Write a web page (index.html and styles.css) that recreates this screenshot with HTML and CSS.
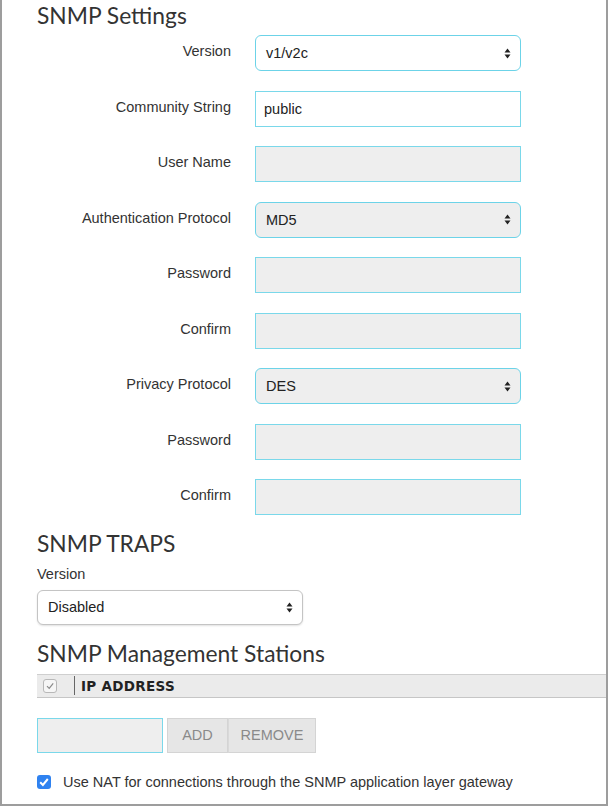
FILE: index.html
```html
<!DOCTYPE html>
<html>
<head>
<meta charset="utf-8">
<link rel="stylesheet" href="styles.css">
</head>
<body>
<div class="page">
  <h2 class="heading first">SNMP Settings</h2>
  <div class="form">
    <label class="lbl">Version</label>
    <div class="field select white"><span>v1/v2c</span><svg class="arrows" width="7" height="11" viewBox="0 0 7 11"><path d="M3.5 0.5L6.5 4.5H0.5Z M3.5 10.5L6.5 6.5H0.5Z" fill="#222"/></svg></div>

    <label class="lbl">Community String</label>
    <div class="field text white"><span>public</span></div>

    <label class="lbl">User Name</label>
    <div class="field text disabled"></div>

    <label class="lbl">Authentication Protocol</label>
    <div class="field select disabled"><span>MD5</span><svg class="arrows" width="7" height="11" viewBox="0 0 7 11"><path d="M3.5 0.5L6.5 4.5H0.5Z M3.5 10.5L6.5 6.5H0.5Z" fill="#222"/></svg></div>

    <label class="lbl">Password</label>
    <div class="field text disabled"></div>

    <label class="lbl">Confirm</label>
    <div class="field text disabled"></div>

    <label class="lbl">Privacy Protocol</label>
    <div class="field select disabled"><span>DES</span><svg class="arrows" width="7" height="11" viewBox="0 0 7 11"><path d="M3.5 0.5L6.5 4.5H0.5Z M3.5 10.5L6.5 6.5H0.5Z" fill="#222"/></svg></div>

    <label class="lbl">Password</label>
    <div class="field text disabled"></div>

    <label class="lbl">Confirm</label>
    <div class="field text disabled"></div>
  </div>

  <h2 class="heading traps">SNMP TRAPS</h2>
  <div class="sublbl">Version</div>
  <div class="plain-select"><span>Disabled</span><svg class="arrows" width="7" height="11" viewBox="0 0 7 11"><path d="M3.5 0.5L6.5 4.5H0.5Z M3.5 10.5L6.5 6.5H0.5Z" fill="#222"/></svg></div>

  <h2 class="heading stations">SNMP Management Stations</h2>
  <div class="table-head">
    <div class="th-check"><span class="mini-box"><svg width="10" height="10" viewBox="0 0 10 10"><path d="M2 5.2L4.2 7.4L8.2 2.4" fill="none" stroke="#8a8a8a" stroke-width="1.2"/></svg></span></div>
    <div class="th-label">IP ADDRESS</div>
  </div>

  <div class="add-row">
    <div class="ip-input"></div>
    <div class="btn-group">
      <button class="btn add">ADD</button>
      <button class="btn remove">REMOVE</button>
    </div>
  </div>

  <div class="nat-row">
    <span class="blue-check"><svg width="14" height="14" viewBox="0 0 14 14"><path d="M3.2 7.2L5.9 9.9L10.8 4" fill="none" stroke="#fff" stroke-width="2"/></svg></span>
    <span class="nat-text">Use NAT for connections through the SNMP application layer gateway</span>
  </div>
</div>
</body>
</html>
```

FILE: styles.css
```css
* { box-sizing: border-box; }
html, body { margin: 0; padding: 0; background: #fff; }
body {
  font-family: "Liberation Sans", Arial, sans-serif;
  font-size: 14.5px;
  color: #333;
}
.page {
  width: 608px;
  height: 806px;
  border-left: 2px solid #9d9d9d;
  border-right: 2px solid #9d9d9d;
  border-bottom: 2px solid #9d9d9d;
  padding: 2px 0 0 35px;
}
.heading {
  font-family: Lato, "Open Sans", sans-serif;
  font-weight: 400;
  font-size: 22.8px;
  line-height: 26px;
  margin: 0;
  color: #333;
}
.heading.first { margin-bottom: 7px; }
.heading.traps { margin-top: 14.5px; }
.heading.stations { margin-top: 15.5px; }

.form {
  display: grid;
  grid-template-columns: 194px 266px;
  column-gap: 24px;
  row-gap: 19.5px;
}
.lbl {
  text-align: right;
  padding-top: 6px;
  line-height: 20px;
  color: #333;
}
.field {
  height: 36px;
  border: 1px solid #7ad8ea;
  display: flex;
  align-items: center;
  padding: 0 10px 0 10px;
  color: #222;
}
.field.white { background: #fff; }
.field.disabled { background: #eeeeee; }
.field.select {
  border-radius: 6px;
  border-color: #6cd3e8;
  justify-content: space-between;
  padding-right: 9px;
}
.field.text { padding-left: 8px; }
.arrows { display: block; }

.sublbl {
  margin-top: 8px;
  line-height: 20px;
  color: #333;
}
.plain-select {
  margin-top: 6px;
  width: 266px;
  height: 35px;
  border: 1px solid #c4c4c4;
  border-radius: 6px;
  box-shadow: 0 1px 2px rgba(0,0,0,0.12);
  background: #fff;
  display: flex;
  align-items: center;
  justify-content: space-between;
  padding: 0 9px 0 10px;
  color: #222;
}

.table-head {
  margin-top: 7.5px;
  height: 24px;
  background: #ebebeb;
  border-top: 1px solid #cfcfcf;
  border-bottom: 1px solid #c6c6c6;
  display: flex;
  align-items: center;
}
.th-check {
  width: 38px;
  height: 19px;
  border-right: 1px solid #666;
  display: flex;
  align-items: center;
  padding-left: 6px;
}
.mini-box {
  width: 14px;
  height: 14px;
  border: 1px solid #b8b8b8;
  border-radius: 3px;
  background: #f6f6f6;
  display: flex;
  align-items: center;
  justify-content: center;
}
.th-label {
  padding-left: 6px;
  font-family: "DejaVu Sans", sans-serif;
  font-weight: bold;
  font-size: 13.5px;
  letter-spacing: 0.3px;
  color: #222;
}

.add-row {
  margin-top: 20px;
  display: flex;
  gap: 4px;
}
.ip-input {
  width: 126px;
  height: 35px;
  background: #eeeeee;
  border: 1px solid #7ad8ea;
}
.btn-group { display: flex; }
.btn {
  height: 35px;
  margin: 0;
  background: #e6e6e6;
  border: 1px solid #d4d4d4;
  color: #8a8a8a;
  font-family: "Liberation Sans", Arial, sans-serif;
  font-size: 14.5px;
  padding: 0;
}
.btn.add { width: 61px; }
.btn.remove { width: 88px; border-left: 1px solid #d9d9d9; }

.nat-row {
  margin-top: 19px;
  display: flex;
  align-items: center;
  line-height: 20px;
}
.blue-check {
  width: 14px;
  height: 14px;
  border-radius: 3px;
  background: #2f82f0;
  display: flex;
  margin-right: 12px;
}
.nat-text { color: #333; }
```
